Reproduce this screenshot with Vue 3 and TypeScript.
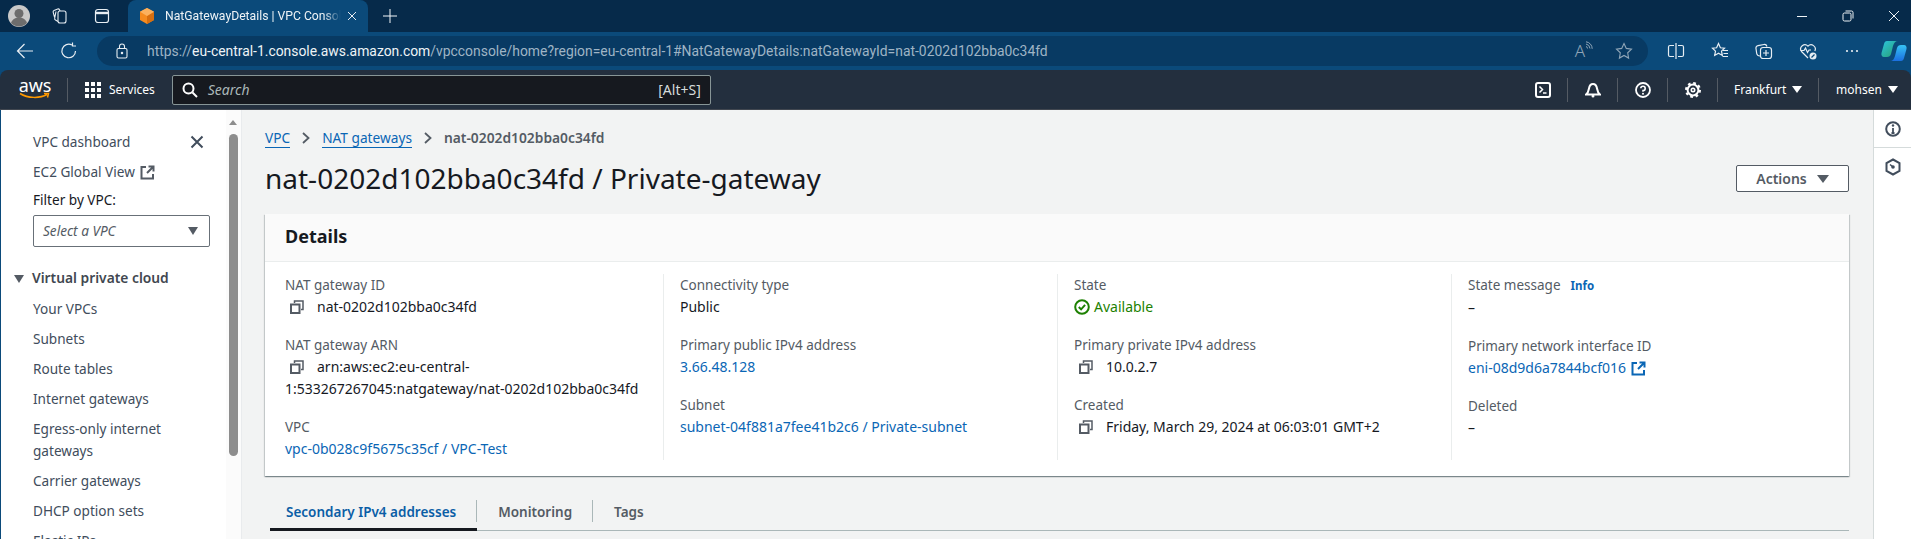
<script setup lang="ts">
interface Field {
  label: string
  value: string
  kind?: 'link' | 'copy' | 'status' | 'ext'
  info?: boolean
}

const navLinks: string[] = ['Your VPCs', 'Subnets', 'Route tables', 'Internet gateways', 'Egress-only internet gateways', 'Carrier gateways', 'DHCP option sets', 'Elastic IPs']

const columns: Field[][] = [
  [
    { label: 'NAT gateway ID', value: 'nat-0202d102bba0c34fd', kind: 'copy' },
    { label: 'NAT gateway ARN', value: 'arn:aws:ec2:eu-central-1:533267267045:natgateway/nat-0202d102bba0c34fd', kind: 'copy' },
    { label: 'VPC', value: 'vpc-0b028c9f5675c35cf / VPC-Test', kind: 'link' }
  ],
  [
    { label: 'Connectivity type', value: 'Public' },
    { label: 'Primary public IPv4 address', value: '3.66.48.128', kind: 'link' },
    { label: 'Subnet', value: 'subnet-04f881a7fee41b2c6 / Private-subnet', kind: 'link' }
  ],
  [
    { label: 'State', value: 'Available', kind: 'status' },
    { label: 'Primary private IPv4 address', value: '10.0.2.7', kind: 'copy' },
    { label: 'Created', value: 'Friday, March 29, 2024 at 06:03:01 GMT+2', kind: 'copy' }
  ],
  [
    { label: 'State message', value: '–', info: true },
    { label: 'Primary network interface ID', value: 'eni-08d9d6a7844bcf016', kind: 'ext' },
    { label: 'Deleted', value: '–' }
  ]
]

const url = { scheme: 'https://', host: 'eu-central-1.console.aws.amazon.com', rest: '/vpcconsole/home?region=eu-central-1#NatGatewayDetails:natGatewayId=nat-0202d102bba0c34fd' }
</script>

<template>
  <div class="app">
    <header class="tabstrip">
      <div class="avatar">
        <svg viewBox="0 0 22 22" width="22" height="22"><circle cx="11" cy="11" r="11" fill="#c9c9c9" /><circle cx="11" cy="8.5" r="4.5" fill="#6d6d6d" /><path d="M3 18c1.500-4 4.500-5.500 8-5.500s6.500 1.500 8 5.500a11 11 0 0 1-16 0z" fill="#6d6d6d" /></svg>
      </div>
      <div class="strip-btn">
        <svg viewBox="0 0 18 18" width="18" height="18" fill="none" stroke="#e8eef3" stroke-width="1.100"><rect x="7" y="4" width="8" height="12" rx="2" /><path d="M7 14.500 4.500 13a1.500 1.500 0 0 1-.8-1.800L5 4.500M9 4 8.500 2.800A1.500 1.500 0 0 0 6.700 2L3 3.500a1.500 1.500 0 0 0-.8 1.800L3.500 10" /></svg>
      </div>
      <div class="strip-btn">
        <svg viewBox="0 0 18 18" width="18" height="18" fill="none" stroke="#e8eef3" stroke-width="1.200"><rect x="2.500" y="2.500" width="13" height="13" rx="2.500" /><path d="M2.500 6h13" stroke-width="2.400" /></svg>
      </div>
      <div class="tab">
        <svg class="favicon" viewBox="0 0 16 18" width="16" height="18"><path d="M8 1 15 4.800V13L8 17 1 13V4.800z" fill="#f58b1f" /><path d="M8 9 15 4.800V13L8 17z" fill="#d76f10" /><path d="M8 1 15 4.800 8 9 1 4.800z" fill="#fbb15e" /></svg>
        <span class="tab-title">NatGatewayDetails | VPC Console</span>
        <svg viewBox="0 0 10 10" width="10" height="10" stroke="#e8eef3" stroke-width="1"><path d="M1 1l8 8M9 1l-8 8" /></svg>
      </div>
      <svg class="plus" viewBox="0 0 14 14" width="14" height="14" stroke="#f2f6f9" stroke-width="1"><path d="M7 0v14M0 7h14" /></svg>
      <div class="win-btns">
        <svg viewBox="0 0 12 12" width="12" height="12" stroke="#eef3f6" stroke-width="1"><path d="M1 6.500h10" /></svg>
        <svg viewBox="0 0 12 12" width="12" height="12" fill="none" stroke="#eef3f6" stroke-width="1"><rect x="1" y="3" width="8" height="8" rx="1.500" /><path d="M3.500 1h6a1.500 1.500 0 0 1 1.500 1.500v6" /></svg>
        <svg viewBox="0 0 12 12" width="12" height="12" stroke="#eef3f6" stroke-width="1"><path d="M1 1l10 10M11 1 1 11" /></svg>
      </div>
    </header>

    <div class="toolbar">
      <svg class="tool-back" viewBox="0 0 18 18" width="18" height="18" fill="none" stroke="#e8eef3" stroke-width="1.200"><path d="M17 9H1.500M8.500 2 1.500 9l7 7" /></svg>
      <svg class="tool-reload" viewBox="0 0 18 18" width="18" height="18" fill="none" stroke="#e8eef3" stroke-width="1.200"><path d="M15.500 9A6.800 6.800 0 1 1 12 3" /><path d="M12.500 .5V4H16" /></svg>
      <div class="address">
        <svg class="lock" viewBox="0 0 12 16" width="12" height="16" fill="none" stroke="#e8eef3" stroke-width="1.100"><rect x="1" y="5.500" width="10" height="9.500" rx="1.500" /><path d="M3.500 5.500V3.500a2.500 2.500 0 0 1 5 0v2" /><circle cx="6" cy="10" r=".7" fill="#e8eef3" /></svg>
        <span class="url"><span class="url-dim">{{ url.scheme }}</span><span class="url-host">{{ url.host }}</span><span class="url-dim">{{ url.rest }}</span></span>
        <span class="read-aloud">A<svg viewBox="0 0 8 10" width="8" height="10" fill="none" stroke="#8fa5b7" stroke-width="1"><path d="M1 5.500a2 2 0 0 1 1.500 2M1 3a5 5 0 0 1 4 4.500M1 .8a7 7 0 0 1 6.200 7" /></svg></span>
        <svg class="addr-star" viewBox="0 0 18 18" width="18" height="18" fill="none" stroke="#8fa5b7" stroke-width="1.100"><path d="m9 1.500 2.300 4.900 5.200.7-3.800 3.700.9 5.300L9 13.500l-4.600 2.600.9-5.300L1.500 7.100l5.200-.7z" /></svg>
      </div>
      <svg class="tool first-tool" viewBox="0 0 18 18" width="18" height="18" fill="none" stroke="#e8eef3" stroke-width="1.200"><path d="M7 3.500H3A1.500 1.500 0 0 0 1.500 5v8A1.500 1.500 0 0 0 3 14.500h4M11 3.500h4A1.500 1.500 0 0 1 16.500 5v8a1.500 1.500 0 0 1-1.500 1.500h-4M9 1v16" /></svg>
      <svg class="tool" viewBox="0 0 18 18" width="18" height="18" fill="none" stroke="#e8eef3" stroke-width="1.200"><path d="m7.500 1.500 1.900 4.300 4.100.4-3 2.900.8 4.300-3.800-2.200-3.800 2.200.8-4.300-3-2.900 4.100-.4zM12 8.500h5M12.500 11.500h4.500M11.500 14.500H17" /></svg>
      <svg class="tool" viewBox="0 0 18 18" width="18" height="18" fill="none" stroke="#e8eef3" stroke-width="1.200"><rect x="5.500" y="5.500" width="11" height="11" rx="2.500" /><path d="M11 8v6M8 11h6M5 14c-2 0-3-1-3.300-2.500L1 6.500C.7 5 1.500 4 3 3.700L9 2.500c1.500-.3 2.500.5 3 2" /></svg>
      <svg class="tool" viewBox="0 0 18 18" width="18" height="18" fill="none" stroke="#e8eef3" stroke-width="1.200"><path d="M9 16 2.500 9.500A4.200 4.200 0 0 1 9 4.200a4.200 4.200 0 0 1 6.800 4.800" /><path d="M1.500 8.500h3.500l1.500-2.500 2 4.500 1.500-2.500H12" /><circle cx="14" cy="14" r="3.500" fill="#e8eef3" stroke="none" /><path d="m12.500 15.500 3-3" stroke="#0b4a7a" /></svg>
      <svg class="tool" viewBox="0 0 18 18" width="18" height="18" fill="#e8eef3"><circle cx="4" cy="9" r="1.100" /><circle cx="9" cy="9" r="1.100" /><circle cx="14" cy="9" r="1.100" /></svg>
      <svg class="copilot" viewBox="0 0 26 24" width="26" height="24">
        <defs>
          <linearGradient id="cpA" x1="0" y1="0" x2="1" y2="1"><stop offset="0" stop-color="#2bc4e0" /><stop offset="1" stop-color="#2a9d6a" /></linearGradient>
          <linearGradient id="cpB" x1="0" y1="0" x2="0" y2="1"><stop offset="0" stop-color="#36c3f5" /><stop offset="1" stop-color="#1b6fe0" /></linearGradient>
        </defs>
        <path d="M6 2h11c-3 0-4 2-5 5l-2 8c-.5 2-2 3-4 3H3c-2 0-3-2-2.500-4L3 5c.4-2 1.500-3 3-3z" fill="url(#cpA)" />
        <path d="M20 22H9c3 0 4-2 5-5l2-8c.5-2 2-3 4-3h3c2 0 3 2 2.500 4L23 19c-.4 2-1.500 3-3 3z" fill="url(#cpB)" />
      </svg>
    </div>

    <nav class="awsnav">
      <div class="logo">
        <span class="logo-text">aws</span>
        <svg viewBox="0 0 32 8" width="32" height="8" fill="none" stroke="#f90" stroke-width="1.500"><path d="M1 1.500C9 6.500 21 6.500 28 2.500M25 1.500h4.500l-1 4" /></svg>
      </div>
      <div class="nav-sep logo-sep"></div>
      <svg class="grid" viewBox="0 0 16 16" width="16" height="16" fill="#fff"><rect width="4" height="4" /><rect x="6" width="4" height="4" /><rect x="12" width="4" height="4" /><rect y="6" width="4" height="4" /><rect x="6" y="6" width="4" height="4" /><rect x="12" y="6" width="4" height="4" /><rect y="12" width="4" height="4" /><rect x="6" y="12" width="4" height="4" /><rect x="12" y="12" width="4" height="4" /></svg>
      <span class="nav-services">Services</span>
      <div class="search">
        <svg viewBox="0 0 16 16" width="16" height="16" fill="none" stroke="#fff" stroke-width="2"><circle cx="6.500" cy="6.500" r="5" /><path d="m10.500 10.500 4.500 4.500" /></svg>
        <span class="search-ph">Search</span>
        <span class="search-key">[Alt+S]</span>
      </div>
      <div class="nav-right">
        <svg class="nav-icon" viewBox="0 0 16 16" width="16" height="16" fill="none" stroke="#fff" stroke-width="2"><rect x="1" y="1" width="14" height="14" rx="2" /><path d="m4.500 4.500 3 3-3 3M8 11h3.500" stroke-width="1.500" /></svg>
        <div class="nav-sep"></div>
        <svg class="nav-icon" viewBox="0 0 16 16" width="16" height="16" fill="none" stroke="#fff" stroke-width="2"><path d="M1 12.500c2-1.500 2.500-3 3-6C4.400 4 6 2 8 2s3.600 2 4 4.500c.5 3 1 4.500 3 6z" /><circle cx="8" cy="14" r="1.500" fill="#fff" stroke="none" /></svg>
        <div class="nav-sep"></div>
        <svg class="nav-icon" viewBox="0 0 16 16" width="16" height="16" fill="none" stroke="#fff" stroke-width="1.800"><circle cx="8" cy="8" r="7" /><path d="M5.800 6.300A2.200 2.200 0 1 1 8 8.600v1.200" stroke-width="1.600" /><circle cx="8" cy="11.800" r="1" fill="#fff" stroke="none" /></svg>
        <div class="nav-sep"></div>
        <svg class="nav-icon" viewBox="0 0 16 16" width="16" height="16" fill="none" stroke="#fff"><circle cx="8" cy="8" r="5.400" stroke-width="2" /><circle cx="8" cy="8" r="1.700" stroke-width="1.600" /><circle cx="8" cy="8" r="6.900" stroke-width="2.200" stroke-dasharray="2.700 2.720" /></svg>
        <div class="nav-sep"></div>
        <span class="nav-menu region">Frankfurt<i class="caret white"></i></span>
        <div class="nav-sep"></div>
        <span class="nav-menu user">mohsen<i class="caret white"></i></span>
      </div>
    </nav>

    <div class="body">
      <aside class="sidebar">
        <div class="side-content">
          <div class="side-top">
            <span>VPC dashboard</span>
            <svg viewBox="0 0 14 14" width="14" height="14" fill="none" stroke="#414d5c" stroke-width="2"><path d="m1.500 1.500 11 11M12.500 1.500l-11 11" /></svg>
          </div>
          <div class="side-link">EC2 Global View
            <svg class="side-ext" viewBox="0 0 15 15" width="15" height="15" fill="none" stroke="#545b64" stroke-width="2"><path d="M6 2H1.500v11.500H13V9M8.500 1.500h5v5M13 2 7 8" /></svg>
          </div>
          <div class="filter-label">Filter by VPC:</div>
          <div class="select"><span>Select a VPC</span><i class="caret dark"></i></div>
          <div class="side-section"><i class="caret dark section-caret"></i>Virtual private cloud</div>
          <ul class="side-list">
            <li v-for="item in navLinks" :key="item">{{ item }}</li>
          </ul>
        </div>
        <div class="scrollbar">
          <i class="scroll-arrow"></i>
          <div class="scroll-thumb"></div>
        </div>
      </aside>

      <main class="main">
        <div class="crumbs">
          <a class="crumb-link">VPC</a>
          <svg viewBox="0 0 10 14" width="10" height="14" fill="none" stroke="#545b64" stroke-width="1.800"><path d="m2 2 5.500 5L2 12" /></svg>
          <a class="crumb-link">NAT gateways</a>
          <svg viewBox="0 0 10 14" width="10" height="14" fill="none" stroke="#545b64" stroke-width="1.800"><path d="m2 2 5.500 5L2 12" /></svg>
          <span class="crumb-current">nat-0202d102bba0c34fd</span>
        </div>
        <div class="title-row">
          <h1>nat-0202d102bba0c34fd / Private-gateway</h1>
          <button class="actions">Actions<i class="caret grey"></i></button>
        </div>
        <section class="card">
          <h2>Details</h2>
          <div class="card-grid">
            <div v-for="(col, i) in columns" :key="i" class="col">
              <div v-for="f in col" :key="f.label" class="field">
                <div class="label">{{ f.label }}<a v-if="f.info" class="info">Info</a></div>
                <div v-if="f.kind === 'copy'" class="value">
                  <svg class="copy" viewBox="0 0 14 14" width="14" height="14" fill="none" stroke="#545b64" stroke-width="2"><rect x="1" y="4.500" width="8.500" height="8.500" /><path d="M4.500 3V1H13v8.500h-2" stroke-width="1.500" /></svg>{{ f.value }}
                </div>
                <div v-else-if="f.kind === 'link'" class="value link">{{ f.value }}</div>
                <div v-else-if="f.kind === 'ext'" class="value link">{{ f.value }}
                  <svg class="ext" viewBox="0 0 15 15" width="15" height="15" fill="none" stroke="#0a66b5" stroke-width="2"><path d="M6 2H1.500v11.500H13V9M8.500 1.500h5v5M13 2 7 8" /></svg>
                </div>
                <div v-else-if="f.kind === 'status'" class="value status">
                  <svg viewBox="0 0 16 16" width="16" height="16" fill="none" stroke="#1d8102" stroke-width="2"><circle cx="8" cy="8" r="6.800" /><path d="m4.800 8 2.300 2.400 4-4.500" /></svg>{{ f.value }}
                </div>
                <div v-else class="value">{{ f.value }}</div>
              </div>
            </div>
          </div>
        </section>
        <div class="tabs">
          <span class="tab-item active">Secondary IPv4 addresses</span>
          <span class="tab-item">Monitoring</span>
          <span class="tab-item last">Tags</span>
        </div>
      </main>

      <div class="rail">
        <div class="rail-cell first">
          <svg viewBox="0 0 16 16" width="16" height="16" fill="none" stroke="#414d5c" stroke-width="2"><circle cx="8" cy="8" r="6.800" /><path d="M8 7v5M6.500 12h3" stroke-width="1.800" /><circle cx="8" cy="4.500" r="1.200" fill="#414d5c" stroke="none" /></svg>
        </div>
        <div class="rail-cell">
          <svg viewBox="0 0 16 18" width="16" height="18" fill="none" stroke="#414d5c" stroke-width="2"><path d="M8 1.500 14.500 5v8L8 16.500 1.500 13V5z" /><circle cx="8" cy="9" r="1.800" fill="#414d5c" stroke="none" /><path d="m5 6.500 3 2.500" stroke-width="1.600" /></svg>
        </div>
      </div>
    </div>
  </div>
</template>

<style>
html, body { margin: 0; background: #0b4a7a; }
</style>

<style scoped>
.app { width: 1911px; height: 539px; overflow: hidden; display: flex; flex-direction: column; font-family: "Noto Sans", "Open Sans", sans-serif; font-size: 14px; line-height: 22px; color: #16191f; background: #0b4a7a; }
svg { display: block; flex: none; }

.tabstrip { height: 32px; flex: none; display: flex; align-items: center; background: #062a4a; position: relative; }
.avatar { width: 22px; margin-left: 8px; }
.strip-btn { margin-left: 21px; width: 18px; }
.strip-btn + .strip-btn { margin-left: 24px; }
.tab { width: 240px; height: 32px; box-sizing: border-box; margin-left: 17px; padding: 0 11px; background: #0b4a7a; border-radius: 8px 8px 0 0; display: flex; align-items: center; color: #eef3f6; font-family: "Roboto", sans-serif; font-size: 12.200px; }
.favicon { margin-right: 10px; }
.tab-title { width: 176px; margin-right: 6px; overflow: hidden; white-space: nowrap; -webkit-mask-image: linear-gradient(90deg, #000 90%, transparent); mask-image: linear-gradient(90deg, #000 90%, transparent); }
.plus { margin-left: 15px; }
.win-btns { margin-left: auto; margin-right: 11px; display: flex; gap: 34px; }

.toolbar { height: 38px; flex: none; display: flex; align-items: center; background: #0b4a7a; }
.tool-back { margin-left: 16px; }
.tool-reload { margin-left: 26px; }
.address { width: 1551px; height: 30px; margin-left: 19px; box-sizing: border-box; padding: 0 15px 0 19px; border-radius: 15px; background: #083a63; display: flex; align-items: center; }
.lock { margin-right: 19px; }
.url { font-family: "Roboto", sans-serif; font-size: 13.900px; white-space: nowrap; }
.url-dim { color: #9fb4c5; }
.url-host { color: #eef3f6; }
.read-aloud { margin-left: auto; display: flex; align-items: flex-start; color: #8fa5b7; font-size: 17px; line-height: 20px; font-weight: 300; }
.addr-star { margin-left: 22px; }
.tool { margin-left: 26px; }
.first-tool { margin-left: 19px; }
.copilot { margin-left: 20px; }

.awsnav { height: 40px; flex: none; box-sizing: border-box; display: flex; align-items: center; background: #232f3e; border-radius: 8px 8px 0 0; border-bottom: 1px solid #414750; color: #fff; }
.logo { margin-left: 19px; width: 32px; display: flex; flex-direction: column; align-items: center; height: 30px; }
.logo-text { font-size: 18px; line-height: 20px; color: #fff; letter-spacing: -.2px; }
.logo svg { margin-top: -3px; }
.nav-sep { width: 1px; height: 24px; background: #545b64; flex: none; }
.logo-sep { margin-left: 16px; }
.grid { margin-left: 17px; }
.nav-services { margin-left: 8px; font-size: 12px; color: #fff; }
.search { width: 539px; height: 30px; margin-left: 17px; box-sizing: border-box; border: 1px solid #879596; border-radius: 2px; background: #16191f; display: flex; align-items: center; padding: 0 9px; }
.search-ph { margin-left: 10px; font-style: italic; color: #aab7b8; font-size: 14px; }
.search-key { margin-left: auto; color: #d5dbdb; font-size: 14px; }
.nav-right { margin-left: auto; display: flex; align-items: center; }
.nav-icon { margin: 0 16px 0 17px; }
.nav-menu { display: flex; align-items: center; color: #fff; font-size: 12px; box-sizing: border-box; }
.region { width: 100px; padding-left: 16px; }
.user { width: 92px; padding-left: 17px; }
.caret { display: inline-block; width: 0; height: 0; border-left: 5px solid transparent; border-right: 5px solid transparent; border-top: 8px solid #545b64; flex: none; }
.caret.white { border-top-color: #fff; border-top-width: 7px; margin-left: 6px; }
.caret.grey { border-left-width: 6px; border-right-width: 6px; border-top-width: 8px; }

.body { flex: 1; min-height: 0; display: flex; background: #f2f3f3; }
.sidebar { width: 240px; flex: none; display: flex; background: #fff; border-left: 1px solid #0b4a7a; border-right: 1px solid #e9ebed; }
.side-content { flex: 1; min-width: 0; padding: 21px 0 0 32px; box-sizing: border-box; color: #414d5c; font-size: 13.600px; }
.side-top { display: flex; align-items: center; justify-content: space-between; width: 171px; }
.side-link { margin-top: 8px; display: flex; align-items: center; }
.side-ext { margin-left: 5px; }
.filter-label { margin-top: 6px; color: #16191f; }
.select { width: 177px; height: 32px; box-sizing: border-box; margin-top: 4px; padding: 0 11px 0 9px; border: 1px solid #687078; border-radius: 2px; font-style: italic; color: #545b64; display: flex; align-items: center; justify-content: space-between; }
.side-section { margin: 20px 0 0 -1px; font-weight: 600; font-size: 13.800px; color: #414750; position: relative; }
.section-caret { position: absolute; left: -18px; top: 8px; }
.side-list { list-style: none; margin: 9px 0 0; padding: 0 8px 0 0; }
.side-list li { margin-bottom: 8px; width: 150px; }
.scrollbar { width: 15px; flex: none; background: #fbfbfb; position: relative; }
.scroll-arrow { position: absolute; left: 3px; top: 10px; width: 0; height: 0; border-left: 4.500px solid transparent; border-right: 4.500px solid transparent; border-bottom: 5px solid #8d8d8d; }
.scroll-thumb { position: absolute; left: 3px; top: 24px; width: 9px; height: 322px; border-radius: 5px; background: #8d8d8d; }

.main { flex: 1; min-width: 0; padding: 17px 24px 0 23px; box-sizing: border-box; }
.crumbs { display: flex; align-items: center; height: 22px; color: #545b64; }
.crumbs svg { margin: 0 11px; }
.crumb-link { color: #0a66b5; line-height: 18px; border-bottom: 1px solid #0a66b5; font-size: 13.700px; }
.crumb-current { color: #545b64; font-weight: 600; font-size: 13.800px; }
.title-row { margin-top: 9px; height: 40px; display: flex; align-items: center; justify-content: space-between; }
h1 { margin: 0; font-size: 28px; line-height: 40px; font-weight: 400; color: #16191f; }
.actions { width: 113px; height: 27px; padding: 0; margin-top: 1px; background: #fff; border: 1px solid #545b64; border-radius: 2px; font: 600 14px/22px "Noto Sans", sans-serif; color: #545b64; display: flex; align-items: center; justify-content: center; gap: 10px; }
.card { margin-top: 16px; background: #fff; box-shadow: 0 1px 1px 0 rgba(0,28,36,.3), 1px 1px 1px 0 rgba(0,28,36,.15), -1px 1px 1px 0 rgba(0,28,36,.15); height: 262px; }
h2 { margin: 0; height: 48px; box-sizing: border-box; padding: 0 20px; font-size: 18px; line-height: 44px; font-weight: 700; background: #fafafa; border-bottom: 1px solid #eaeded; color: #16191f; }
.card-grid { display: grid; grid-template-columns: repeat(4, 394px); padding: 12px 0 0 4px; }
.col { height: 186px; padding-left: 16px; border-left: 1px solid #eaeded; box-sizing: border-box; }
.col:first-child { border-left: 0; padding-left: 16px; }
.field { margin-bottom: 16px; }
.label { color: #545b64; font-size: 13.500px; }
.info { margin-left: 10px; color: #0a66b5; font-size: 11.500px; font-weight: 700; }
.value { color: #16191f; }
.copy { display: inline-block; vertical-align: -2px; margin: 0 13px 0 5px; }
.link { color: #0a66b5; display: flex; align-items: center; }
.ext { margin-left: 5px; }
.status { color: #1d8102; display: flex; align-items: center; gap: 4px; }
.tabs { margin-top: 19px; height: 35px; display: flex; align-items: stretch; border-bottom: 1px solid #aab7b8; position: relative; margin-left: 5px; }
.tab-item { display: flex; align-items: center; font-weight: 600; font-size: 13.500px; color: #545b64; padding: 0 21px; position: relative; height: 30px; margin-top: 2px; }
.tab-item::after { content: ""; position: absolute; right: 0; top: 3px; height: 22px; width: 1px; background: #aab7b8; }
.tab-item.last::after { display: none; }
.tab-item.active { color: #0a5ea6; padding-left: 16px; }
.tab-item.active::before { content: ""; position: absolute; left: 0; right: 0; bottom: -4px; height: 3px; background: #16191f; }

.rail { width: 38px; flex: none; background: #fff; border-left: 1px solid #d5dbdb; box-sizing: border-box; }
.rail-cell { height: 38px; display: flex; align-items: center; justify-content: center; }
.rail-cell.first { height: 37px; border-bottom: 1px solid #d5dbdb; }
</style>
